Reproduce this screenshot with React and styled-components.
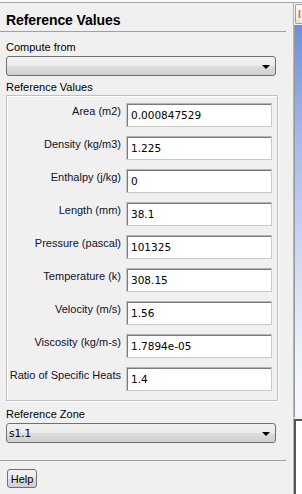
import React from 'react'
import styled, { createGlobalStyle } from 'styled-components'

const GlobalStyle = createGlobalStyle`
  html, body {
    margin: 0;
    padding: 0;
    background: #f0f0f0;
  }
  body {
    font-family: "Liberation Sans", Arial, sans-serif;
    font-size: 11px;
    color: #000;
  }
`

const Window = styled.div`
  width: 302px;
  height: 494px;
  display: flex;
  flex-direction: column;
  overflow: hidden;
  background: #f0f0f0;
`

const TopEdge = styled.div`
  height: 2px;
  background: #fafafa;
  border-bottom: 1px solid #a9a9a9;
`

const Body = styled.div`
  flex: 1;
  display: flex;
`

const Panel = styled.div`
  width: 293px;
  border-right: 1px solid #b4b4b4;
  display: flex;
  flex-direction: column;
`

const Heading = styled.h1`
  margin: 0;
  padding: 9px 6px 0;
  height: 19px;
  font-size: 14px;
  line-height: 17px;
  font-weight: bold;
  letter-spacing: -0.1px;
  border-bottom: 1px solid #a0a0a0;
  margin-right: 7px;
`

const Section = styled.div`
  padding: 0 6px;
  display: flex;
  flex-direction: column;
  margin-top: ${p => p.$gap}px;
`

const Caption = styled.div`
  height: 14px;
  line-height: 14px;
  color: #000;
`

const SelectBox = styled.div`
  width: 263px;
  height: 18px;
  border: 1px solid #707070;
  border-radius: 3px;
  background: linear-gradient(#f2f2f2 0%, #ebebeb 48%, #dddddd 52%, #cfcfcf 100%);
  display: flex;
  align-items: center;
  justify-content: space-between;
  padding: 0 3px 0 2px;
  margin-top: 2px;
  box-sizing: content-box;
  font-family: "DejaVu Sans", sans-serif;
  font-size: 10.5px;
`

const Arrow = styled.span`
  width: 0;
  height: 0;
  border-left: 4px solid transparent;
  border-right: 4px solid transparent;
  border-top: 4px solid #000;
  margin-right: 2px;
  margin-top: 1px;
`

const Group = styled.div`
  width: 272px;
  height: 306px;
  border: 1px solid #c0c0c0;
  box-shadow: inset 1px 1px 0 #ffffff, 1px 1px 0 #ffffff;
  display: grid;
  grid-template-columns: 114px 146px;
  column-gap: 5px;
  row-gap: 9px;
  align-content: start;
  padding-top: 7px;
  box-sizing: border-box;
  margin-top: 1px;
`

const Label = styled.div`
  text-align: right;
  padding-top: 2px;
  line-height: 13px;
  white-space: nowrap;
  color: #10102a;
`

const Field = styled.div`
  height: 24px;
  box-sizing: border-box;
  border: 1px solid #c9c9c9;
  border-top-color: #b4b4b4;
  background: #fff;
  box-shadow: inset 1px 1px 0 #7a7a7a;
  padding: 5px 0 0 4px;
  font-family: "DejaVu Sans", sans-serif;
  font-size: 10.5px;
  line-height: 13px;
`

const Rule = styled.div`
  height: 1px;
  background: #a0a0a0;
  margin: 17px 7px 0 0;
`

const HelpButton = styled.button`
  margin: 8px 0 0 7px;
  width: 30px;
  height: 19px;
  padding: 0;
  border: 1px solid #707070;
  border-radius: 3px;
  background: linear-gradient(#f2f2f2 0%, #ebebeb 48%, #dddddd 52%, #cfcfcf 100%);
  font-family: "Liberation Sans", Arial, sans-serif;
  font-size: 11px;
  color: #000;
  align-self: flex-start;
`

const Strip = styled.div`
  flex: 1;
  display: flex;
  flex-direction: column;
  padding-top: 1px;
`

const Tab = styled.div`
  height: 20px;
  margin: 0 0 1px 1px;
  border: 1px solid #a0a0a0;
  border-right: none;
  border-radius: 2px 0 0 2px;
  background: linear-gradient(#fbfbfb, #e4e4e4);
  color: #c98a00;
  font-size: 11px;
  font-weight: bold;
  padding: 3px 0 0 2px;
  box-sizing: border-box;
`

const Viewport = styled.div`
  height: 392px;
  border-left: 1px solid #9a9a9a;
  background: linear-gradient(#6e8ed8 0%, #a7bbea 30%, #dde4f6 70%, #f1f4fb 88%, #f6f8fc 100%);
`

const Console = styled.div`
  flex: 1;
  margin-top: 2px;
  border-top: 2px solid #555;
  border-left: 2px solid #555;
  background: #fff;
`

const rows = [
  ['Area (m2)', '0.000847529'],
  ['Density (kg/m3)', '1.225'],
  ['Enthalpy (j/kg)', '0'],
  ['Length (mm)', '38.1'],
  ['Pressure (pascal)', '101325'],
  ['Temperature (k)', '308.15'],
  ['Velocity (m/s)', '1.56'],
  ['Viscosity (kg/m-s)', '1.7894e-05'],
  ['Ratio of Specific Heats', '1.4'],
]

const App = () => {
  return (
    <Window>
      <GlobalStyle />
      <TopEdge />
      <Body>
        <Panel>
          <Heading>Reference Values</Heading>
          <Section $gap={8}>
            <Caption>Compute from</Caption>
            <SelectBox>
              <span />
              <Arrow />
            </SelectBox>
          </Section>
          <Section $gap={4}>
            <Caption>Reference Values</Caption>
            <Group>
              {rows.map(([label, value]) => (
                <React.Fragment key={label}>
                  <Label>{label}</Label>
                  <Field>{value}</Field>
                </React.Fragment>
              ))}
            </Group>
          </Section>
          <Section $gap={6}>
            <Caption>Reference Zone</Caption>
            <SelectBox>
              <span>s1.1</span>
              <Arrow />
            </SelectBox>
          </Section>
          <Rule />
          <HelpButton>Help</HelpButton>
        </Panel>
        <Strip>
          <Tab>I</Tab>
          <Viewport />
          <Console />
        </Strip>
      </Body>
    </Window>
  )
}

export default App
